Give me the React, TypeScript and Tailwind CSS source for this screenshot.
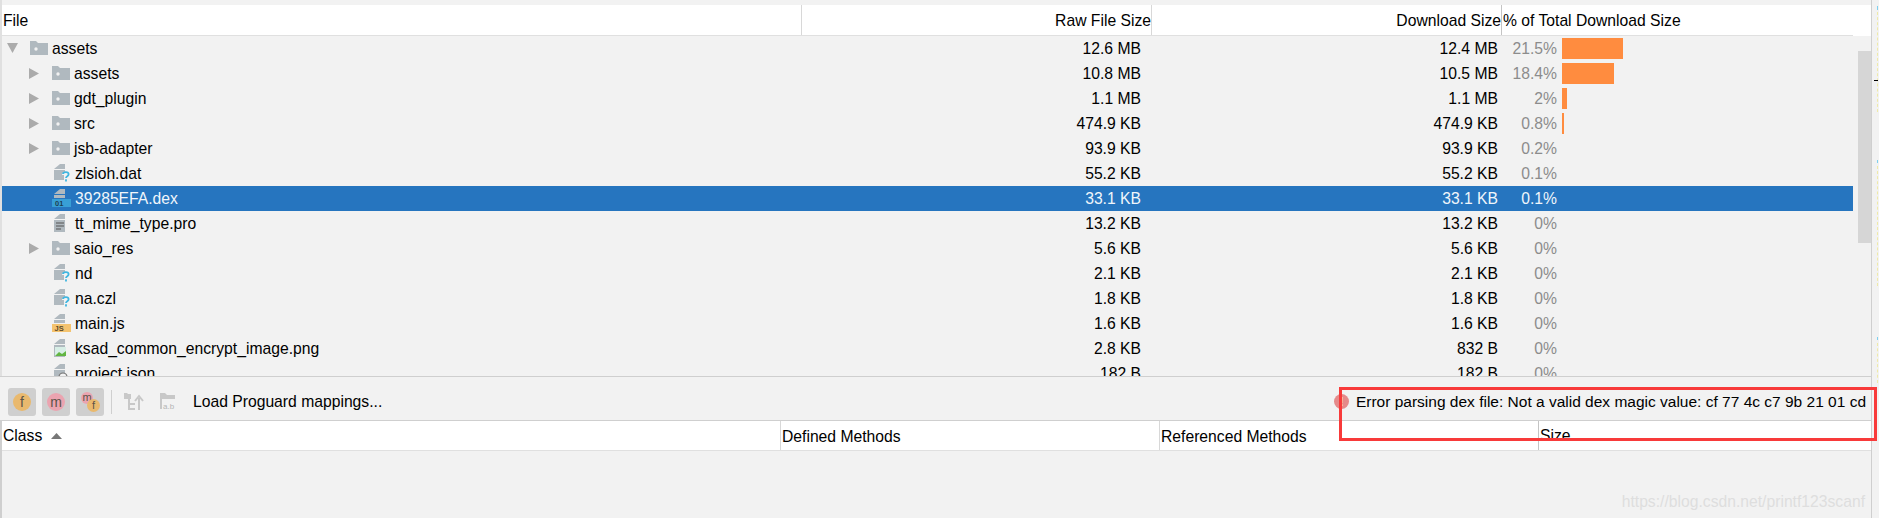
import React from 'react';

interface Row {
  name: string;
  raw: string;
  dl: string;
  pct: string;
  bar?: number;
  icon: 'folder' | 'unknown' | 'dex' | 'text' | 'js' | 'image' | 'json';
  depth: 0 | 1;
  open?: boolean;
  selected?: boolean;
}

const rows: Row[] = [
  { name: 'assets', raw: '12.6 MB', dl: '12.4 MB', pct: '21.5%', bar: 61, icon: 'folder', depth: 0, open: true },
  { name: 'assets', raw: '10.8 MB', dl: '10.5 MB', pct: '18.4%', bar: 52, icon: 'folder', depth: 1 },
  { name: 'gdt_plugin', raw: '1.1 MB', dl: '1.1 MB', pct: '2%', bar: 5, icon: 'folder', depth: 1 },
  { name: 'src', raw: '474.9 KB', dl: '474.9 KB', pct: '0.8%', bar: 2, icon: 'folder', depth: 1 },
  { name: 'jsb-adapter', raw: '93.9 KB', dl: '93.9 KB', pct: '0.2%', icon: 'folder', depth: 1 },
  { name: 'zlsioh.dat', raw: '55.2 KB', dl: '55.2 KB', pct: '0.1%', icon: 'unknown', depth: 1 },
  { name: '39285EFA.dex', raw: '33.1 KB', dl: '33.1 KB', pct: '0.1%', icon: 'dex', depth: 1, selected: true },
  { name: 'tt_mime_type.pro', raw: '13.2 KB', dl: '13.2 KB', pct: '0%', icon: 'text', depth: 1 },
  { name: 'saio_res', raw: '5.6 KB', dl: '5.6 KB', pct: '0%', icon: 'folder', depth: 1 },
  { name: 'nd', raw: '2.1 KB', dl: '2.1 KB', pct: '0%', icon: 'unknown', depth: 1 },
  { name: 'na.czl', raw: '1.8 KB', dl: '1.8 KB', pct: '0%', icon: 'unknown', depth: 1 },
  { name: 'main.js', raw: '1.6 KB', dl: '1.6 KB', pct: '0%', icon: 'js', depth: 1 },
  { name: 'ksad_common_encrypt_image.png', raw: '2.8 KB', dl: '832 B', pct: '0%', icon: 'image', depth: 1 },
  { name: 'project.json', raw: '182 B', dl: '182 B', pct: '0%', icon: 'json', depth: 1 },
];

const FileIcon = ({ kind }: { kind: Row['icon'] }) => {
  if (kind === 'folder') {
    return (
      <svg width="18" height="14" viewBox="0 0 18 14" className="shrink-0">
        <path d="M0 0h6l2 2h10v12H0z" fill="#b0b9bf" />
        <circle cx="6" cy="8" r="1.7" fill="#f2f2f2" />
      </svg>
    );
  }
  return (
    <svg width="19" height="18" viewBox="0 0 19 18" className="shrink-0">
      {kind === 'unknown' && (
        <>
          <path d="M2 5L8 0h5v5z" fill="#b0b9bf" />
          <path d="M2 6h11v2c-2 .5-3 1.5-3 3h2v5H2z" fill="#b0b9bf" />
          <path d="M11 10c.3-2.4 5.6-2.6 5.6.3 0 2-2.6 1.8-2.6 3.8M14 15.2v2.4" fill="none" stroke="#40b6e0" strokeWidth="1.8" />
        </>
      )}
      {kind === 'dex' && (
        <>
          <path d="M2 5L8 0h5v5zM2 6h11v3H2z" fill="#b0b9bf" />
          <rect x="0" y="10" width="19" height="8" fill="#389fd6" />
          <text x="3" y="16.8" fontSize="7.5" fontWeight="700" fill="#1f3f52" fontFamily="Liberation Sans">01</text>
        </>
      )}
      {kind === 'text' && (
        <>
          <path d="M2 5L8 0h5v5zM2 6h11v12H2z" fill="#b0b9bf" />
          <path d="M4 9h8M4 12h8M4 15h5" stroke="#555" strokeWidth="1.2" />
        </>
      )}
      {kind === 'js' && (
        <>
          <path d="M2 5L8 0h5v5zM2 6h11v3H2z" fill="#b0b9bf" />
          <rect x="0" y="10" width="19" height="8" fill="#f4c36f" />
          <text x="2.5" y="16.8" fontSize="7.5" fontWeight="700" fill="#5c4a2b" fontFamily="Liberation Sans">JS</text>
        </>
      )}
      {kind === 'image' && (
        <>
          <path d="M2 5L8 0h5v5zM2 6h11v12H2z" fill="#b0b9bf" />
          <rect x="3" y="8" width="11" height="9" fill="#d7eee6" />
          <path d="M3 17l4-4 3 2 4-3v5z" fill="#62b543" />
        </>
      )}
      {kind === 'json' && (
        <>
          <path d="M2 5L8 0h5v5zM2 6h11v12H2z" fill="#b0b9bf" />
          <circle cx="11" cy="13" r="4" fill="#f2f2f2" stroke="#777" strokeWidth="1.2" />
        </>
      )}
    </svg>
  );
};

const Arrow = ({ open }: { open?: boolean }) => (
  <svg width="11" height="11" viewBox="0 0 11 11" className="shrink-0">
    <path d={open ? 'M0 0h11L5.5 10z' : 'M0 0l10 5.5L0 11z'} fill="#ababab" />
  </svg>
);

const RoundBadge = ({ letter, color }: { letter: string; color: string }) => (
  <span className={`flex h-[18px] w-[18px] items-center justify-center rounded-full text-[14px] leading-none text-[#5b5348] ${color}`}>
    {letter}
  </span>
);

const App: React.FC = () => {
  return (
    <div className="relative flex h-[518px] w-full overflow-hidden bg-[#f2f2f2] text-[15.7px] text-black" style={{ fontFamily: '"Liberation Sans", Arial, sans-serif' }}>
      <div className="flex w-[1872px] shrink-0 flex-col border-r border-[#cfcfcf]">
        <div className="relative flex h-[376px] shrink-0 flex-col overflow-hidden border-l-2 border-[#e0e0e0] pt-[5px]">
          <div className="flex h-[31px] shrink-0 items-center bg-white">
            <div className="flex h-full w-[1851px] shrink-0 border-b border-[#e0e0e0]">
              <div className="h-full w-[800px] shrink-0 border-r border-[#d8d8d8] pl-px leading-[31px]">File</div>
              <div className="h-full w-[350px] shrink-0 border-r border-[#d8d8d8] text-right leading-[31px]">Raw File Size</div>
              <div className="h-full w-[350px] shrink-0 border-r border-[#c4c4c4] text-right leading-[31px]">Download Size</div>
              <div className="pl-px leading-[31px]">% of Total Download Size</div>
            </div>
          </div>
          <div className="flex min-h-0 flex-1">
            <div className="flex w-[1851px] shrink-0 flex-col">
              {rows.map((r, i) => (
                <div key={i} className={`flex h-[25px] shrink-0 items-center ${r.selected ? 'bg-[#2675bf] text-[#f0f6fb]' : ''}`}>
                  <div className={`flex w-[800px] shrink-0 items-center ${r.depth === 0 ? 'pl-[5px]' : 'pl-[27px]'}`}>
                    <div className="flex w-[23px] shrink-0">
                      {r.icon === 'folder' && <Arrow open={r.open} />}
                    </div>
                    <FileIcon kind={r.icon} />
                    <span className="ml-[4px]">{r.name}</span>
                  </div>
                  <div className="w-[339px] shrink-0 text-right">{r.raw}</div>
                  <div className="w-[357px] shrink-0 text-right">{r.dl}</div>
                  <div className={`w-[59px] shrink-0 text-right ${r.selected ? '' : 'text-[#8c8c8c]'}`}>{r.pct}</div>
                  {r.bar !== undefined && <div className="ml-[5px] h-[21px] bg-[#ff8c3f]" style={{ width: r.bar }} />}
                </div>
              ))}
            </div>
            <div className="ml-[5px] mt-[15px] h-[192px] w-[14px] shrink-0 bg-[#d6d6d6]" />
          </div>
        </div>
        <div className="flex h-[45px] shrink-0 items-center border-y border-[#cfcfcf] pl-[8px] pr-[5px] pt-[6px]">
          <div className="flex gap-[6px]">
            <div className="flex h-[28px] w-[28px] items-center justify-center rounded-[3px] bg-[#cfcfcf]">
              <RoundBadge letter="f" color="bg-[#e9b96e]" />
            </div>
            <div className="flex h-[28px] w-[28px] items-center justify-center rounded-[3px] bg-[#cfcfcf]">
              <RoundBadge letter="m" color="bg-[#eba4b0]" />
            </div>
            <div className="relative h-[28px] w-[28px] rounded-[3px] bg-[#cfcfcf]">
              <span className="absolute left-[5px] top-[4px] flex h-[12px] w-[12px] items-center justify-center rounded-full bg-[#eba4b0] text-[11px] leading-none text-[#5b5348]">m</span>
              <span className="absolute left-[11px] top-[11px] flex h-[13px] w-[13px] items-center justify-center rounded-full bg-[#e9b96e] text-[11px] leading-none text-[#5b5348]">f</span>
            </div>
          </div>
          <div className="ml-[7px] h-[24px] w-px bg-[#cfcfcf]" />
          <svg width="20" height="18" viewBox="0 0 20 18" className="ml-[12px]">
            <path d="M0 0h3l1 1h3v5H0z" fill="#c8c8c8" />
            <path d="M5 6v10h6M5 11h6M15 17V5M11 8l4-5 4 5" fill="none" stroke="#c8c8c8" strokeWidth="2" />
          </svg>
          <svg width="18" height="18" viewBox="0 0 18 18" className="ml-[16px]">
            <path d="M0 0h5l2 2h8v4H2v10H0z" fill="#c8c8c8" />
            <text x="3" y="16" fontSize="8" fill="#b5b5b5" fontFamily="Liberation Sans">a.b</text>
          </svg>
          <span className="ml-[15px]">Load Proguard mappings...</span>
          <div className="ml-auto flex items-center">
            <span className="flex h-[15px] w-[15px] items-center justify-center rounded-full bg-[#e58a8a] text-[12px] font-bold leading-none text-white">!</span>
            <span className="ml-[7px] text-[15.5px]">Error parsing dex file: Not a valid dex magic value: cf 77 4c c7 9b 21 01 cd</span>
          </div>
        </div>
        <div className="flex min-h-0 flex-1 flex-col border-l-2 border-[#cfcfcf]">
          <div className="flex h-[30px] shrink-0 items-center border-b border-[#e0e0e0] bg-white">
            <div className="flex h-full w-[779px] shrink-0 items-center border-r border-[#d8d8d8] pl-px pt-px">
              Class
              <svg width="11" height="6" viewBox="0 0 11 6" className="ml-[9px]"><path d="M5.5 0L11 6H0z" fill="#777" /></svg>
            </div>
            <div className="h-full w-[379px] shrink-0 border-r border-[#d8d8d8] pl-px leading-[31px]">Defined Methods</div>
            <div className="h-full w-[379px] shrink-0 border-r border-[#c4c4c4] pl-px leading-[31px]">Referenced Methods</div>
            <div className="pl-px leading-[31px]">Size</div>
          </div>
        </div>
      </div>
      {/* edge of the next window, just a sliver of it shows */}
      <div className="relative flex-1">
        <div className="absolute left-[5px] top-[6px] h-[4px] w-px bg-[#7fd0ee]" />
        <div className="absolute left-[5px] top-[12px] h-[100px] w-px border-l border-dashed border-[#efeaa8]" />
        <div className="absolute left-[2px] top-[80px] h-px w-[4px] bg-black" />
        <div className="absolute left-[5px] top-[160px] h-[3px] w-px bg-[#7fd0ee]" />
        <div className="absolute left-[5px] top-[166px] h-[120px] w-px border-l border-dashed border-[#efeaa8]" />
        <div className="absolute left-[5px] top-[337px] h-[3px] w-px bg-[#7fd0ee]" />
        <div className="absolute left-[5px] top-[343px] h-[40px] w-px border-l border-dashed border-[#efeaa8]" />
      </div>
      {/* annotation drawn on top of the screenshot */}
      <div className="pointer-events-none absolute left-[1339px] top-[387px] h-[54px] w-[538px] border-[3px] border-[#f83a3a]" />
      <div className="pointer-events-none absolute bottom-[4px] right-[14px] text-[#dedede]">https://blog.csdn.net/printf123scanf</div>
    </div>
  );
};

export default App;
